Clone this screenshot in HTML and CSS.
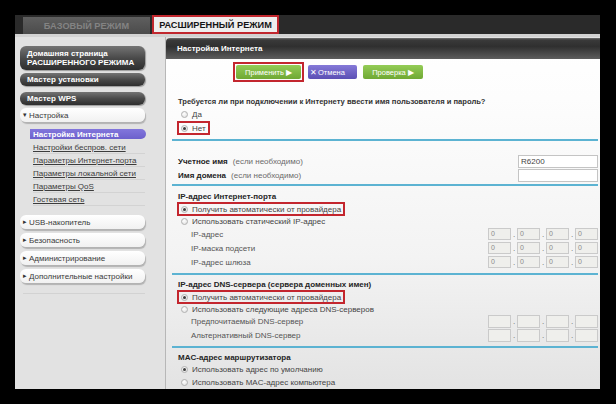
FILE: index.html
```html
<!DOCTYPE html>
<html lang="ru">
<head>
<meta charset="utf-8">
<title>Настройка Интернета</title>
<link rel="stylesheet" href="styles.css">
</head>
<body>
<div class="screen">
  <div class="tabs">
    <div class="tab tab-basic">БАЗОВЫЙ РЕЖИМ</div>
    <div class="tab tab-adv">РАСШИРЕННЫЙ РЕЖИМ</div>
  </div>
  <div class="rule"></div>
  <div class="main">
    <nav class="side">
      <div class="menu-dark home">Домашняя страница<br>РАСШИРЕННОГО РЕЖИМА</div>
      <div class="menu-dark wizard">Мастер установки</div>
      <div class="menu-dark wps">Мастер WPS</div>
      <div class="menu-light open"><span class="arrow">▾</span>Настройка</div>
      <div class="current">Настройка Интернета</div>
      <ul class="sub">
        <li><a>Настройки беспров. сети</a></li>
        <li><a>Параметры Интернет-порта</a></li>
        <li><a>Параметры локальной сети</a></li>
        <li><a>Параметры QoS</a></li>
        <li><a>Гостевая сеть</a></li>
      </ul>
      <div class="menu-light group first"><span class="arrow">▸</span>USB-накопитель</div>
      <div class="menu-light group"><span class="arrow">▸</span>Безопасность</div>
      <div class="menu-light group"><span class="arrow">▸</span>Администрирование</div>
      <div class="menu-light group"><span class="arrow">▸</span>Дополнительные настройки</div>
      <div class="side-line"></div>
    </nav>
    <section class="panel">
      <div class="panel-head">Настройка Интернета</div>
      <div class="toolbar">
        <div class="hl-btn"><button class="btn green apply">Применить ▶</button></div>
        <button class="btn purple cancel"><span class="x">✕</span>Отмена</button>
        <button class="btn green check">Проверка ▶</button>
      </div>
      <div class="form">
        <div class="q">Требуется ли при подключении к Интернету ввести имя пользователя и пароль?</div>
        <div class="opt h14"><span class="radio"></span>Да</div>
        <div class="opt h14 hl"><span class="radio on"></span>Нет</div>
        <div class="sep s-login"></div>

        <div class="field"><b>Учетное имя</b><span class="hint">(если необходимо)</span><span class="text-in">R6200</span></div>
        <div class="field"><b>Имя домена</b><span class="hint">(если необходимо)</span><span class="text-in"></span></div>
        <div class="sep s-ip"></div>

        <div class="title">IP-адрес Интернет-порта</div>
        <div class="opt h14 hl"><span class="radio on"></span>Получить автоматически от провайдера</div>
        <div class="opt h11"><span class="radio"></span>Использовать статический IP-адрес</div>
        <div class="ip"><span class="lbl">IP-адрес</span>
          <span class="octets"><span class="box">0</span><i>.</i><span class="box">0</span><i>.</i><span class="box">0</span><i>.</i><span class="box">0</span></span></div>
        <div class="ip"><span class="lbl">IP-маска подсети</span>
          <span class="octets"><span class="box">0</span><i>.</i><span class="box">0</span><i>.</i><span class="box">0</span><i>.</i><span class="box">0</span></span></div>
        <div class="ip"><span class="lbl">IP-адрес шлюза</span>
          <span class="octets"><span class="box">0</span><i>.</i><span class="box">0</span><i>.</i><span class="box">0</span><i>.</i><span class="box">0</span></span></div>
        <div class="sep s-dns"></div>

        <div class="title">IP-адрес DNS-сервера (сервера доменных имен)</div>
        <div class="opt h14 hl"><span class="radio on"></span>Получить автоматически от провайдера</div>
        <div class="opt h10"><span class="radio"></span>Использовать следующие адреса DNS-серверов</div>
        <div class="ip"><span class="lbl">Предпочитаемый DNS-сервер</span>
          <span class="octets dns"><span class="box"></span><i>.</i><span class="box"></span><i>.</i><span class="box"></span><i>.</i><span class="box"></span></span></div>
        <div class="ip"><span class="lbl">Альтернативный DNS-сервер</span>
          <span class="octets dns"><span class="box"></span><i>.</i><span class="box"></span><i>.</i><span class="box"></span><i>.</i><span class="box"></span></span></div>
        <div class="sep s-mac"></div>

        <div class="title">MAC-адрес маршрутизатора</div>
        <div class="opt h13"><span class="radio on"></span>Использовать адрес по умолчанию</div>
        <div class="opt h13"><span class="radio"></span>Использовать MAC-адрес компьютера</div>
      </div>
    </section>
  </div>
</div>
</body>
</html>
```

FILE: styles.css
```css
html, body {
  margin: 0;
  background: #000;
}

body {
  width: 616px;
  height: 404px;
  overflow: hidden;
  font-family: "Liberation Sans", Arial, sans-serif;
}

.screen {
  margin: 15px 0 0 15px;
  width: 585px;
  height: 374px;
  overflow: hidden;
  display: flex;
  flex-direction: column;
}

/* mode tabs */
.tabs {
  height: 19px;
  flex-shrink: 0;
  display: flex;
  gap: 2px;
  padding-left: 8px;
  background: #2a2a2a;
}

.tab {
  width: 127px;
  box-sizing: border-box;
  display: flex;
  align-items: center;
  justify-content: center;
  font-size: 9.2px;
  font-weight: bold;
}

.tab-basic {
  margin-top: 2px;
  background: linear-gradient(#5f5f5f, #4b4b4b);
  color: #838383;
}

.tab-adv {
  background: #eeeeee;
  color: #151515;
  border: 2px solid #c1272e;
}

.rule {
  height: 3px;
  flex-shrink: 0;
  background: #d2d2d2;
}

.main {
  flex: 1;
  display: flex;
  background: #e2e2e2;
}

/* left navigation */
.side {
  width: 151px;
  flex-shrink: 0;
  box-sizing: border-box;
  border-right: 1px solid #b7b7b7;
  padding: 9px 0 0 5px;
  display: flex;
  flex-direction: column;
  font-size: 8px;
}

.menu-dark {
  width: 125px;
  box-sizing: border-box;
  padding-left: 7px;
  border-radius: 6px;
  background: linear-gradient(#747474, #4a4a4a 50%, #2e2e2e);
  box-shadow: 1px 1px 1px #9c9c9c;
  color: #fff;
  font-weight: bold;
  display: flex;
  align-items: center;
}

.home {
  height: 24px;
  line-height: 9px;
}

.wizard {
  height: 13px;
  margin-top: 3px;
}

.wps {
  height: 13px;
  margin-top: 6px;
}

.menu-light {
  width: 125px;
  height: 14px;
  box-sizing: border-box;
  padding-left: 3px;
  border-radius: 6px;
  background: linear-gradient(#ffffff, #f1f1f1);
  box-shadow: 1px 2px 1px #b3b3b3;
  color: #3a3a3a;
  display: flex;
  align-items: center;
}

.menu-light .arrow {
  font-size: 7px;
  width: 6px;
  color: #333;
}

.open {
  margin-top: 3px;
}

.current {
  margin: 7px 0 0 10px;
  width: 116px;
  height: 10px;
  box-sizing: border-box;
  padding-left: 3px;
  border-radius: 0 6px 6px 0;
  background: linear-gradient(#8276dc, #6c60cc);
  color: #fff;
  font-weight: bold;
  display: flex;
  align-items: center;
}

.sub {
  list-style: none;
  margin: 2px 0 0 13px;
  padding: 0;
  width: 112px;
}

.sub li {
  height: 13px;
  box-sizing: border-box;
  border-bottom: 1px solid #d3d3d3;
  display: flex;
  align-items: center;
}

.sub a {
  color: #3c3c3c;
  text-decoration: underline;
}

.group {
  margin-top: 4px;
}

.group.first {
  margin-top: 9px;
}

.side-line {
  margin: 10px 0 0 3px;
  width: 122px;
  border-top: 1px solid #d2d2d2;
}

/* content panel */
.panel {
  flex: 1;
  margin-top: 1px;
  border-top-left-radius: 4px;
  background: linear-gradient(#ffffff 0, #fdfdfd 60px, #f3f3f3 220px, #e3e3e3 100%);
  display: flex;
  flex-direction: column;
}

.panel-head {
  height: 21px;
  flex-shrink: 0;
  box-sizing: border-box;
  padding-left: 11px;
  border-top-left-radius: 4px;
  background: linear-gradient(#707070 0, #3a3a3a 2px, #2f2f2f 40%, #5d5d5d 100%);
  color: #fff;
  font-size: 8px;
  font-weight: bold;
  display: flex;
  align-items: center;
}

.toolbar {
  height: 29px;
  flex-shrink: 0;
  box-sizing: border-box;
  padding: 3px 0 0 67px;
  display: flex;
  align-items: flex-start;
}

.hl-btn {
  padding: 1px;
  border: 2px solid #c3262e;
  display: flex;
}

.btn {
  height: 14px;
  padding: 0;
  border: 0;
  border-radius: 2px;
  font-family: inherit;
  font-size: 7.5px;
  color: #fff;
  display: flex;
  align-items: center;
  justify-content: center;
}

.green {
  background: linear-gradient(#94cc56, #6fa833);
}

.purple {
  background: linear-gradient(#8579d8, #5b4fb4);
}

.apply {
  width: 65px;
}

.cancel {
  width: 49px;
  margin: 3px 0 0 4px;
  justify-content: flex-start;
  padding-left: 2px;
}

.cancel .x {
  font-size: 8px;
  margin-right: 1px;
}

.check {
  width: 60px;
  margin: 3px 0 0 6px;
}

/* form */
.form {
  padding: 7px 2px 0 12px;
  display: flex;
  flex-direction: column;
  font-size: 8px;
  color: #3a3a3a;
}

.q {
  height: 12px;
  display: flex;
  align-items: center;
  font-size: 7.6px;
  font-weight: bold;
  color: #333;
}

.opt {
  display: flex;
  align-items: center;
  gap: 4px;
  padding-left: 3px;
  color: #444;
}

.h10 { height: 10px; }
.h11 { height: 11px; }
.h13 { height: 13px; }
.h14 { height: 14px; }

.hl {
  align-self: flex-start;
  margin-left: -1px;
  padding-left: 4px;
  padding-right: 4px;
  outline: 2px solid #c3262e;
  outline-offset: -2px;
}

.radio {
  width: 7px;
  height: 7px;
  box-sizing: border-box;
  border-radius: 50%;
  border: 1px solid #b1b1b1;
  background: radial-gradient(circle at 40% 35%, #ffffff, #dcdcdc);
  display: flex;
  align-items: center;
  justify-content: center;
}

.radio.on::after {
  content: "";
  width: 3px;
  height: 3px;
  border-radius: 50%;
  background: #3d3d3d;
}

.sep {
  height: 2px;
  margin-left: -6px;
  background: #5cb3d2;
}

.s-login { margin-top: 4px; margin-bottom: 14px; }
.s-ip    { margin-top: 2px; margin-bottom: 4px; }
.s-dns   { margin-top: 4px; margin-bottom: 3px; }
.s-mac   { margin-top: 4px; margin-bottom: 3px; }

.field {
  height: 13px;
  display: flex;
  align-items: center;
  color: #222;
}

.field + .field {
  margin-top: 1px;
}

.field .hint {
  margin-left: 5px;
  color: #6a6a6a;
}

.text-in {
  margin-left: auto;
  width: 80px;
  height: 13px;
  box-sizing: border-box;
  border: 1px solid #c4c4c4;
  background: #fff;
  padding-left: 2px;
  font-size: 8px;
  line-height: 11px;
  color: #444;
}

.title {
  height: 12px;
  display: flex;
  align-items: center;
  font-weight: bold;
  color: #252525;
}

.ip {
  height: 14px;
  display: flex;
  align-items: center;
  padding-left: 13px;
  color: #555;
}

.octets {
  margin-left: auto;
  display: flex;
  align-items: center;
}

.octets i {
  width: 6px;
  font-style: normal;
  text-align: center;
  color: #666;
  font-size: 8px;
}

.box {
  width: 23px;
  height: 12px;
  box-sizing: border-box;
  border: 1px solid #cacaca;
  background: #efefec;
  padding-left: 2px;
  font-size: 7px;
  line-height: 10px;
  color: #8a8a8a;
}

.dns .box {
  height: 13px;
}
```
